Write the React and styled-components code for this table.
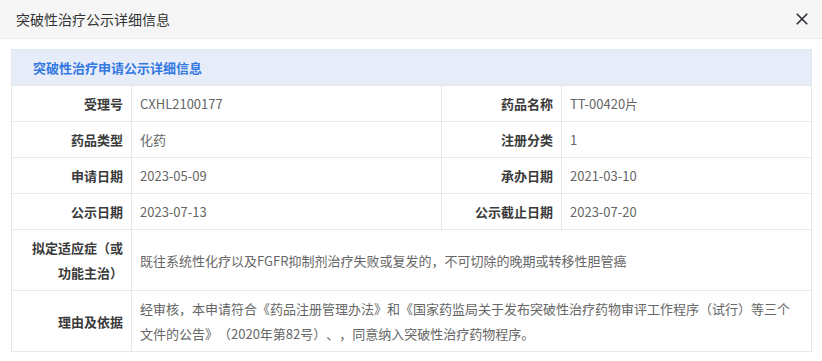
import React from "react";
import styled, { createGlobalStyle } from "styled-components";

const GlobalStyle = createGlobalStyle`
  html, body { margin: 0; padding: 0; background: #fff; }
  body {
    font-family: "Noto Sans CJK SC", "Noto Sans", sans-serif;
    text-spacing-trim: space-all;
  }
`;

const Dialog = styled.div`
  width: 822px;
  background: #fff;
`;

const Header = styled.div`
  height: 38px;
  display: flex;
  align-items: center;
  justify-content: space-between;
  padding: 0 14px 0 16px;
  background: #f6f6f6;
  border-bottom: 1px solid #e9e9e9;
`;

const Title = styled.div`
  font-size: 14px;
  color: #333;
`;

const CloseButton = styled.button`
  border: 0;
  background: transparent;
  padding: 0;
  width: 12px;
  height: 12px;
  display: flex;
  cursor: pointer;
`;

const Body = styled.div`
  padding: 10px 11px 10px 11px;
`;

const Table = styled.table`
  width: 800px;
  table-layout: fixed;
  border-collapse: collapse;
  font-size: 13px;
  line-height: 25px;
  text-spacing-trim: space-all;
`;

const Caption = styled.th`
  height: 25px;
  padding: 5px 20px 5px 21px;
  background: #e6edf8;
  border: 1px solid #e3e6ea;
  color: #3478e2;
  font-weight: bold;
  text-align: left;
`;

const Label = styled.th`
  padding: 5px 8px 5px 12px;
  border: 1px solid #e8e8e8;
  color: #3a3a3a;
  font-weight: bold;
  text-align: right;
  vertical-align: middle;
`;

const Value = styled.td`
  padding: 5px 12px 5px 8px;
  border: 1px solid #e8e8e8;
  color: #666;
  text-align: left;
  vertical-align: middle;
`;

const rows = [
  [["受理号", "CXHL2100177"], ["药品名称", "TT-00420片"]],
  [["药品类型", "化药"], ["注册分类", "1"]],
  [["申请日期", "2023-05-09"], ["承办日期", "2021-03-10"]],
  [["公示日期", "2023-07-13"], ["公示截止日期", "2023-07-20"]],
];

const wide = [
  ["拟定适应症（或功能主治）", "既往系统性化疗以及FGFR抑制剂治疗失败或复发的，不可切除的晚期或转移性胆管癌"],
  [
    "理由及依据",
    "经审核，本申请符合《药品注册管理办法》和《国家药监局关于发布突破性治疗药物审评工作程序（试行）等三个文件的公告》（2020年第82号）、，同意纳入突破性治疗药物程序。",
  ],
];

export default function App() {
  return (
    <>
      <GlobalStyle />
      <Dialog>
        <Header>
          <Title>突破性治疗公示详细信息</Title>
          <CloseButton aria-label="关闭">
            <svg width="12" height="12" viewBox="0 0 12 12">
              <path d="M0.8 0.8 L11.2 11.2 M11.2 0.8 L0.8 11.2" stroke="#2b2b36" strokeWidth="1.6" fill="none" />
            </svg>
          </CloseButton>
        </Header>
        <Body>
          <Table>
            <colgroup>
              <col style={{ width: 120 }} />
              <col style={{ width: 310 }} />
              <col style={{ width: 120 }} />
              <col style={{ width: 250 }} />
            </colgroup>
            <thead>
              <tr>
                <Caption colSpan={4}>突破性治疗申请公示详细信息</Caption>
              </tr>
            </thead>
            <tbody>
              {rows.map((r, i) => (
                <tr key={i}>
                  {r.map(([k, v]) => (
                    <React.Fragment key={k}>
                      <Label>{k}</Label>
                      <Value>{v}</Value>
                    </React.Fragment>
                  ))}
                </tr>
              ))}
              {wide.map(([k, v]) => (
                <tr key={k}>
                  <Label>{k}</Label>
                  <Value colSpan={3}>{v}</Value>
                </tr>
              ))}
            </tbody>
          </Table>
        </Body>
      </Dialog>
    </>
  );
}
